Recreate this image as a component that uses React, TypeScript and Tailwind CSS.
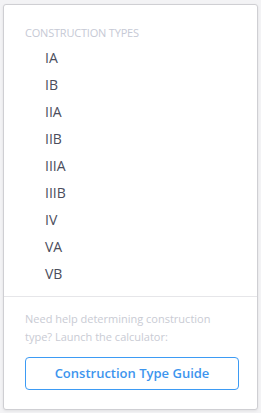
import React from "react";

const TYPES = ["IA", "IB", "IIA", "IIB", "IIIA", "IIIB", "IV", "VA", "VB"];

export default function App() {
  return (
    <div
      className="h-[413px] w-[261px] overflow-hidden bg-[#f3f3f5] pl-[3px] pr-[3px] pt-[4px]"
      style={{ fontFamily: '"Open Sans", "Liberation Sans", sans-serif' }}
    >
      <div className="flex h-[406px] w-[255px] flex-col rounded-[3px] border border-[#cfcfd3] bg-white shadow-[0_1px_3px_rgba(0,0,0,0.08)]">
        <div className="px-[21px] pt-[21px]">
          <div className="text-[11px] uppercase leading-[14px] tracking-[-0.2px] text-[#c6c9d5]">
            Construction Types
          </div>
          <ul className="mt-[4px] pl-[20px]">
            {TYPES.map((t) => (
              <li key={t} className="h-[27px] text-[14px] leading-[28px] text-[#4b4d5c]">
                {t}
              </li>
            ))}
          </ul>
        </div>
        <div className="mt-[9px] border-t border-[#e6e6e9] px-[21px] pt-[13px]">
          <p className="text-[11px] leading-[18px] text-[#c9cbd4]">
            Need help determining construction type? Launch the calculator:
          </p>
          <button className="mt-[11px] h-[33px] w-[214px] rounded-[4px] border border-[#3d9bf4] text-[13px] font-semibold text-[#3d95ee]">
            Construction Type Guide
          </button>
        </div>
      </div>
    </div>
  );
}
